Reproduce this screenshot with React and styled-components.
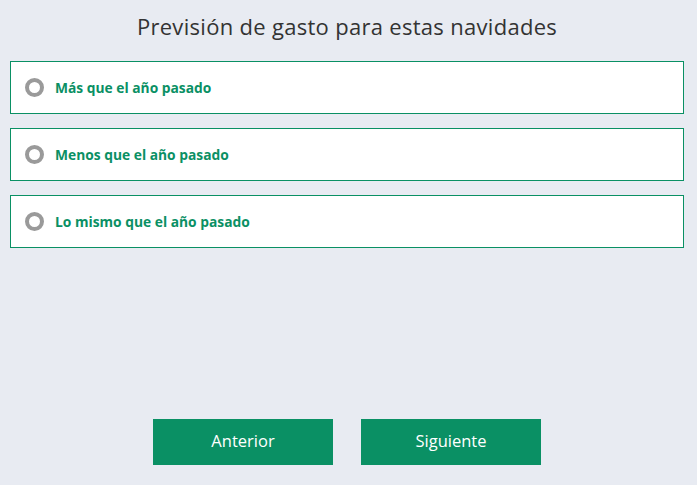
import React from 'react';
import styled, { createGlobalStyle } from 'styled-components';

const GlobalStyle = createGlobalStyle`
  html, body {
    margin: 0;
    background: #e8ebf2;
  }
  body {
    font-family: "Open Sans", "Liberation Sans", sans-serif;
  }
`;

const Page = styled.div`
  height: 485px;
  display: flex;
  flex-direction: column;
  padding: 0 13px 20px 10px;
  box-sizing: border-box;
`;

const Title = styled.h1`
  margin: 9px 0 0;
  height: 34px;
  line-height: 34px;
  text-align: center;
  font-size: 22px;
  font-weight: 400;
  color: #333333;
  letter-spacing: 0.3px;
`;

const Options = styled.div`
  margin-top: 18px;
  display: flex;
  flex-direction: column;
  gap: 14px;
`;

const Option = styled.label`
  height: 53px;
  box-sizing: border-box;
  display: flex;
  align-items: center;
  gap: 11px;
  padding-left: 14px;
  background: #ffffff;
  border: 1px solid #0a9064;
  cursor: pointer;
`;

const Radio = styled.span`
  width: 19px;
  height: 19px;
  box-sizing: border-box;
  border-radius: 50%;
  border: 4px solid #9a9a9a;
  background: #ffffff;
  flex: none;
`;

const Label = styled.span`
  font-size: 13.8px;
  font-weight: 700;
  color: #0a9064;
`;

const Footer = styled.div`
  margin-top: auto;
  display: flex;
  justify-content: center;
  gap: 28px;
`;

const Button = styled.button`
  width: 180px;
  height: 46px;
  padding: 0 0 3px;
  border: none;
  background: #0a9064;
  color: #ffffff;
  font-family: inherit;
  font-size: 16.5px;
  font-weight: 400;
  cursor: pointer;
`;

const options = [
  'Más que el año pasado',
  'Menos que el año pasado',
  'Lo mismo que el año pasado',
];

export default function App() {
  return (
    <>
      <GlobalStyle />
      <Page>
        <Title>Previsión de gasto para estas navidades</Title>
        <Options>
          {options.map((o) => (
            <Option key={o}>
              <Radio />
              <Label>{o}</Label>
            </Option>
          ))}
        </Options>
        <Footer>
          <Button>Anterior</Button>
          <Button>Siguiente</Button>
        </Footer>
      </Page>
    </>
  );
}
